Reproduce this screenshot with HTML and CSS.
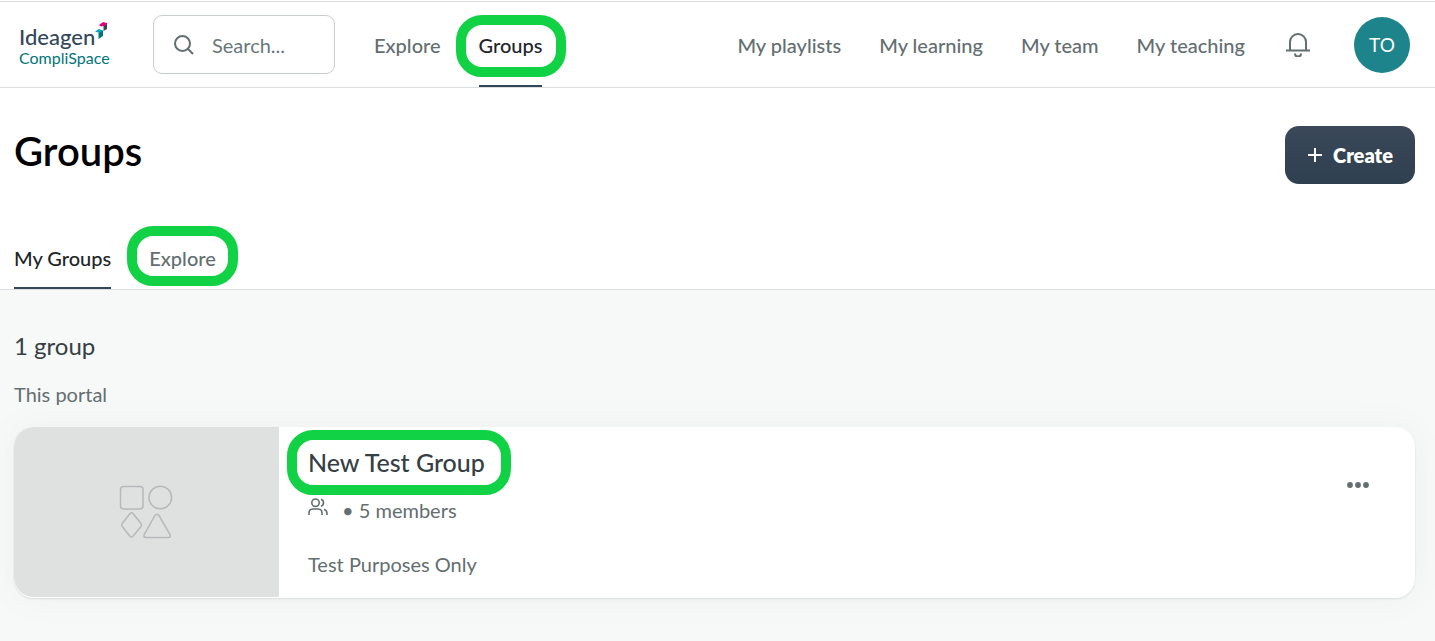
FILE: index.html
```html
<!DOCTYPE html>
<html lang="en">
<head>
<meta charset="utf-8">
<meta name="viewport" content="width=device-width, initial-scale=1">
<title>Groups</title>
<link rel="stylesheet" href="styles.css">
</head>
<body>
<header class="topbar">
  <a class="logo" href="#">
    <span class="logo-name">Ideagen</span>
    <span class="logo-sub">CompliSpace</span>
    <svg class="logo-mark" viewBox="0 0 13 18" aria-hidden="true">
      <path d="M4 3 8 0l4 1v4L8.500 4 6 4.500z" fill="#e5007d"/>
      <path d="M8.500 4 12 2v5L8.500 9z" fill="#33475b"/>
      <path d="M0 9.500 4 7l4 1.500L5 11 3 10.500z" fill="#00a3c4"/>
      <path d="M3.500 11 8 8.500V14l-4.500 3z" fill="#00757a"/>
    </svg>
  </a>
  <label class="search">
    <svg class="search-icon" viewBox="0 0 20 20" aria-hidden="true"><circle cx="8.500" cy="8.500" r="7.500"/><path d="m14 14 5 5"/></svg>
    <input class="search-input" type="text" placeholder="Search..." aria-label="Search">
  </label>
  <nav class="nav" aria-label="Main">
    <a class="nav-link" href="#">Explore</a>
    <a class="nav-link active" href="#">Groups<span class="ring ring-nav"></span></a>
  </nav>
  <nav class="nav nav-end" aria-label="Personal">
    <a class="nav-link" href="#">My playlists</a>
    <a class="nav-link" href="#">My learning</a>
    <a class="nav-link" href="#">My team</a>
    <a class="nav-link" href="#">My teaching</a>
  </nav>
  <button class="bell" type="button" aria-label="Notifications">
    <svg viewBox="0 0 24 24" aria-hidden="true"><path d="M4 17V9a8 8 0 0 1 16 0v8M0 17.500h24M9 20.500a3 3 0 0 0 6 0"/></svg>
  </button>
  <button class="avatar" type="button">TO</button>
</header>
<section class="heading">
  <div class="heading-row">
    <h1 class="title">Groups</h1>
    <button class="create" type="button">
      <svg class="plus" viewBox="0 0 16 16" aria-hidden="true"><path d="M8 1v14M1 8h14"/></svg>
      <span>Create</span>
    </button>
  </div>
  <nav class="tabs" aria-label="Groups">
    <a class="tab active" href="#">My Groups</a>
    <a class="tab" href="#">Explore<span class="ring ring-tab"></span></a>
  </nav>
</section>
<main class="content">
  <h2 class="count">1 group</h2>
  <p class="portal">This portal</p>
  <article class="card">
    <div class="media">
      <svg class="shapes" viewBox="0 0 54 54" aria-hidden="true">
        <rect x="1.500" y="1.500" width="22.500" height="22.500" rx="3"/>
        <circle cx="41.300" cy="12.500" r="11.300"/>
        <path d="M10.800 28.800Q12.500 26.500 14.200 28.800L22 38.500Q23.300 40 22 41.500L14.200 51Q12.500 53.300 10.800 51L3.200 41.500Q2 40 3.200 38.500Z"/>
        <path d="M36 30.500Q38 28 40 30.500L51 49.500Q52 52.500 49.500 52.500H27Q24 52.500 25.200 49.500Z"/>
      </svg>
    </div>
    <div class="details">
      <h3 class="name"><a class="name-link" href="#">New Test Group<span class="ring ring-name"></span></a></h3>
      <p class="members">
        <svg class="people" viewBox="0 0 20 18" aria-hidden="true"><circle cx="7.500" cy="4.700" r="3.700"/><path d="M1 17v-2q0-4 4-4h5q4 0 4 4v2M13 1.200a3.700 3.700 0 0 1 0 7M16 11.500q3 .5 3 4V17"/></svg>
        <span>• 5 members</span>
      </p>
      <p class="about">Test Purposes Only</p>
    </div>
    <button class="more" type="button" aria-label="More options">
      <svg viewBox="0 0 22 6" aria-hidden="true"><circle cx="3" cy="3" r="2.900"/><circle cx="11" cy="3" r="2.900"/><circle cx="19" cy="3" r="2.900"/></svg>
    </button>
  </article>
</main>
</body>
</html>
```
FILE: styles.css
```css
* { box-sizing: border-box; }
body {
  margin: 0;
  min-height: 100vh;
  display: flex;
  flex-direction: column;
  background: #fff;
  color: #636e71;
  font: 400 20px/24px Lato, "Open Sans", sans-serif;
}
h1, h2, h3, p { margin: 0; }
a { color: inherit; text-decoration: none; }
button { padding: 0; border: 0; background: none; font: inherit; color: inherit; cursor: pointer; }
svg { display: block; fill: none; stroke: currentColor; }

.topbar {
  display: flex;
  align-items: stretch;
  height: 87px;
  margin-top: 1px;
  padding: 0 25px 0 19px;
  border-top: 1px solid #dcdfe0;
  border-bottom: 1px solid #dcdfe0;
}
.logo { position: relative; display: flex; flex-direction: column; align-self: center; width: 90px; margin-right: 44px; padding-top: 3px; }
.logo-name { font-size: 22px; line-height: 24px; font-weight: 500; color: #33475b; }
.logo-sub { font-size: 16px; line-height: 18px; color: #00757a; }
.logo-mark { position: absolute; top: 0; right: 1px; width: 13px; height: 18px; stroke: none; }

.search {
  display: flex;
  align-items: center;
  align-self: center;
  gap: 18px;
  width: 182px;
  height: 59px;
  padding: 0 20px;
  border: 1px solid #c9cecf;
  border-radius: 9px;
}
.search-icon { flex: none; width: 20px; height: 20px; stroke-width: 2; }
.search-input { width: 100%; min-width: 0; padding: 0; border: 0; outline: 0; background: none; font: inherit; color: inherit; }
.search-input::placeholder { color: #68777c; opacity: 1; }

.nav { display: flex; gap: 38px; margin-left: 39px; font-weight: 500; }
.nav-end { margin-left: auto; }
.nav-link { position: relative; display: flex; align-items: center; border-bottom: 2px solid transparent; padding-top: 2px; }
.nav-link.active { color: #1d2528; border-color: #33475b; }

.bell { align-self: center; width: 24px; height: 24px; margin: 0 44px 0 41px; }
.bell svg { width: 24px; height: 24px; stroke-width: 2; }
.avatar { align-self: center; width: 56px; height: 56px; border-radius: 50%; background: #1c848a; color: #fff; font-size: 19px; }

.ring { position: absolute; border: 10px solid #11d245; border-radius: 26px; pointer-events: none; }
.ring-nav { inset: 13px -24px 8px -23px; }
.ring-tab { inset: -20px -22px 1px -22px; }
.ring-name { inset: -16px -26px -17px -21px; }

.heading { padding: 38px 20px 0 14px; border-bottom: 1px solid #dcdfe0; }
.heading-row { display: flex; justify-content: space-between; align-items: center; }
.title { font-size: 40px; line-height: 48px; font-weight: 600; color: #000; padding-bottom: 8px; }
.create {
  display: flex;
  align-items: center;
  justify-content: center;
  gap: 10px;
  width: 130px;
  height: 58px;
  border-radius: 14px;
  background: linear-gradient(#3a4859, #2f4050);
  color: #fff;
  font-weight: 800;
}
.plus { width: 16px; height: 16px; stroke-width: 2; }
.tabs { display: flex; gap: 38px; margin-top: 62px; font-weight: 500; }
.tab { position: relative; padding-bottom: 17px; border-bottom: 2px solid transparent; }
.tab.active { color: #1d2528; border-color: #33475b; }

.content { flex: 1; padding: 40px 20px 42px 14px; background: #f7f9f8; }
.count { font-size: 24px; line-height: 32px; font-weight: 400; color: #354044; }
.portal { margin-top: 20px; }
.card {
  display: flex;
  margin-top: 21px;
  border-radius: 20px;
  background: #fff;
  box-shadow: 0 1px 2px rgba(40, 60, 60, .12), 0 0 40px rgba(40, 60, 60, .04);
}
.media { display: grid; place-items: center; width: 265px; min-height: 170px; margin-bottom: 1px; padding-right: 2px; border-radius: 20px 0 0 20px; background: #dfe1e0; }
.shapes { width: 54px; height: 54px; color: #b5b9ba; stroke-width: 1.5; }
.details { flex: 1; padding: 19px 29px; }
.name { display: flex; font-size: 25px; line-height: 32px; font-weight: 500; color: #354044; }
.name-link { position: relative; }
.members { display: flex; gap: 14px; margin-top: 20px; }
.people { width: 20px; height: 18px; stroke-width: 1.6; }
.about { margin-top: 30px; }
.more { align-self: flex-start; margin: 55px 46px 0 0; }
.more svg { width: 22px; height: 6px; fill: currentColor; stroke: none; }
```
